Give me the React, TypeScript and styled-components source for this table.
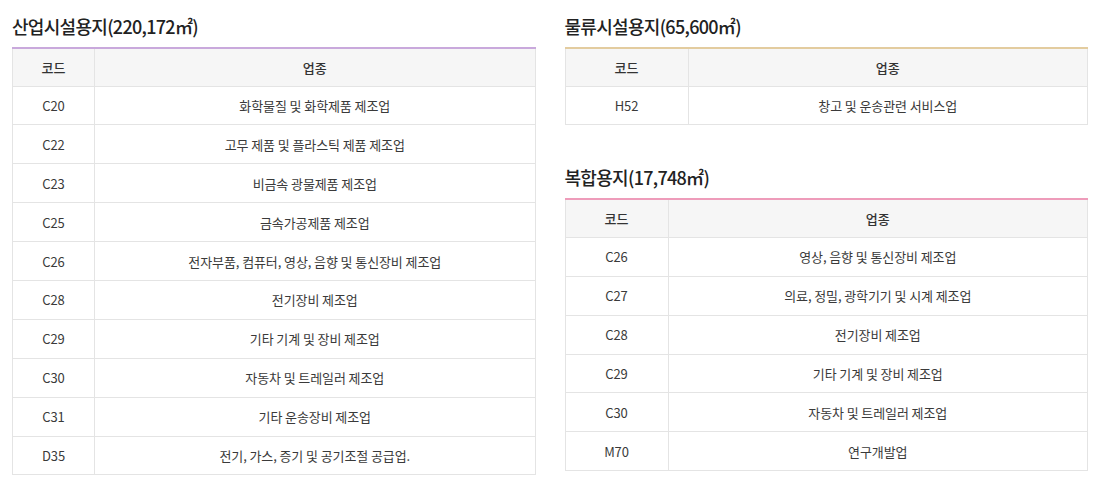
import React from "react";
import styled, { createGlobalStyle } from "styled-components";

const GlobalStyle = createGlobalStyle`
  html, body { margin: 0; padding: 0; background: #fff; }
  body { font-family: "Noto Sans CJK KR", "Noto Sans", sans-serif; color: #333; }
`;

const Page = styled.div`
  display: grid;
  grid-template-columns: 1fr 1fr;
  column-gap: 29px;
  padding: 13px 12px 0 12px;
  align-items: start;
`;

const Column = styled.div`
  display: flex;
  flex-direction: column;
  gap: 39px;
`;

const Section = styled.section`
  display: flex;
  flex-direction: column;
`;

const Title = styled.h3`
  margin: 0 0 8px 0;
  font-size: 18px;
  line-height: 26px;
  font-weight: 500;
  color: #222;
  letter-spacing: -0.7px;
`;

const Table = styled.table<{ $accent: string }>`
  width: 100%;
  border-collapse: collapse;
  table-layout: fixed;
  border-top: 2px solid ${(p) => p.$accent};
  font-size: 13px;
`;

const Th = styled.th`
  background: #f6f6f6;
  border: 1px solid #e4e4e4;
  border-top: none;
  height: 38px;
  padding: 0;
  font-weight: 500;
  color: #333;
  text-align: center;
  box-sizing: border-box;
`;

const Td = styled.td`
  border: 1px solid #e4e4e4;
  height: 37.9px;
  padding: 0;
  text-align: center;
  color: #3a3a3a;
  letter-spacing: -0.1px;
`;

type Row = [string, string];

const industrial: Row[] = [
  ["C20", "화학물질 및 화학제품 제조업"],
  ["C22", "고무 제품 및 플라스틱 제품 제조업"],
  ["C23", "비금속 광물제품 제조업"],
  ["C25", "금속가공제품 제조업"],
  ["C26", "전자부품, 컴퓨터, 영상, 음향 및 통신장비 제조업"],
  ["C28", "전기장비 제조업"],
  ["C29", "기타 기계 및 장비 제조업"],
  ["C30", "자동차 및 트레일러 제조업"],
  ["C31", "기타 운송장비 제조업"],
  ["D35", "전기, 가스, 증기 및 공기조절 공급업."],
];

const logistics: Row[] = [["H52", "창고 및 운송관련 서비스업"]];

const mixed: Row[] = [
  ["C26", "영상, 음향 및 통신장비 제조업"],
  ["C27", "의료, 정밀, 광학기기 및 시계 제조업"],
  ["C28", "전기장비 제조업"],
  ["C29", "기타 기계 및 장비 제조업"],
  ["C30", "자동차 및 트레일러 제조업"],
  ["M70", "연구개발업"],
];

function CodeTable({
  title,
  accent,
  codeWidth,
  rows,
}: {
  title: string;
  accent: string;
  codeWidth: number;
  rows: Row[];
}) {
  return (
    <Section>
      <Title>{title}</Title>
      <Table $accent={accent}>
        <colgroup>
          <col style={{ width: codeWidth }} />
          <col />
        </colgroup>
        <thead>
          <tr>
            <Th>코드</Th>
            <Th>업종</Th>
          </tr>
        </thead>
        <tbody>
          {rows.map(([c, n]) => (
            <tr key={c}>
              <Td>{c}</Td>
              <Td>{n}</Td>
            </tr>
          ))}
        </tbody>
      </Table>
    </Section>
  );
}

export default function App() {
  return (
    <>
      <GlobalStyle />
      <Page>
        <Column>
          <CodeTable title="산업시설용지(220,172㎡)" accent="#c9a9dc" codeWidth={82} rows={industrial} />
        </Column>
        <Column>
          <CodeTable title="물류시설용지(65,600㎡)" accent="#e3cc9f" codeWidth={123} rows={logistics} />
          <CodeTable title="복합용지(17,748㎡)" accent="#ee9cba" codeWidth={103} rows={mixed} />
        </Column>
      </Page>
    </>
  );
}
